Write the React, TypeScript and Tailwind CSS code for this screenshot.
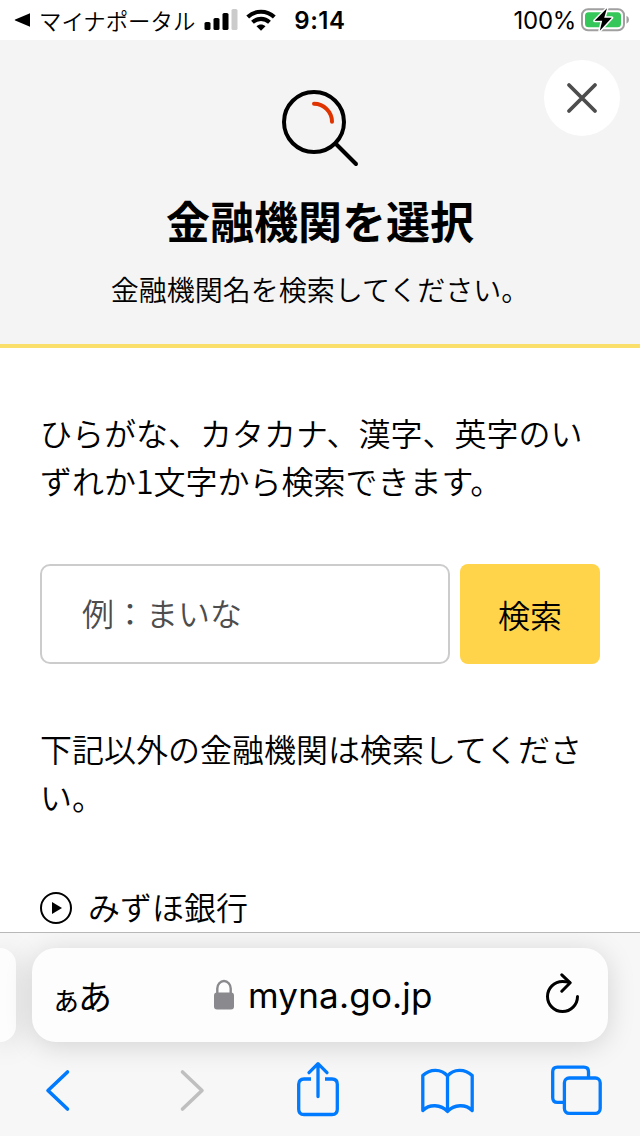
import type { ReactNode } from 'react'

function StatusBar() {
    return (
        <div className="flex h-10 shrink-0 items-center bg-white pl-[14px] pr-[10px] text-black">
            <svg width="17" height="16" viewBox="0 0 17 16" aria-hidden="true">
                <path d="M16 1.2v13.6L1.2 8.6q-1.2-.6 0-1.2z" />
            </svg>
            <span className="ml-2 whitespace-nowrap text-[22.4px] font-[350] leading-10">マイナポータル</span>

            {/* Signal strength */}
            <svg className="ml-[9px]" width="34" height="22" viewBox="0 0 34 22" aria-hidden="true">
                <rect x="0.5" y="13" width="6" height="8" rx="1.6" />
                <rect x="9.5" y="9" width="6" height="12" rx="1.6" />
                <rect x="18.5" y="4" width="6" height="17" rx="1.6" />
                <rect x="27.5" y="0" width="6" height="21" rx="1.6" fill="#cbcbcb" />
            </svg>

            {/* Wi-Fi */}
            <svg className="ml-2" width="30" height="22" viewBox="0 0 30 22" fill="none" stroke="#000" strokeWidth="4.1" aria-hidden="true">
                <path d="M1.7 8C9.3 .9 20.7 .9 28.3 8" />
                <path d="M6.5 13.2c4.9-4.5 12.1-4.5 17 0" />
                <path d="M10.5 17.2L15 21.7l4.5-4.5c-2.7-2.3-6.3-2.3-9 0z" fill="#000" stroke="none" />
            </svg>

            <span className="ml-[18px] pt-0.5 font-['Inter',sans-serif] text-[24px] font-semibold leading-[38px] tracking-[0.5px]">9:14</span>
            <span className="ml-auto pt-0.5 font-['Inter',sans-serif] text-[24px] leading-[38px] tracking-[-0.3px]">100%</span>

            {/* Battery */}
            <svg className="ml-[5px]" width="49" height="26" viewBox="0 0 49 26" aria-hidden="true">
                <rect x="1" y="2.2" width="42" height="21" rx="6" fill="none" stroke="#a0a0a0" strokeWidth="2" />
                <rect x="4" y="5.2" width="36" height="15" rx="3.5" fill="#35c759" />
                <path d="M45.5 8.8v8q2.5-1 2.5-4t-2.5-4z" fill="#a0a0a0" />
                <path d="M26 1.2L13.6 13.8h7.6L18.8 23.8 30.8 10.8h-7.6z" fill="#000" stroke="#fff" strokeWidth="3" strokeLinejoin="round" paintOrder="stroke" />
            </svg>
        </div>
    )
}

function PageHeader() {
    return (
        <header className="relative flex h-[308px] shrink-0 flex-col items-center border-b-4 border-[#fbdf6b] bg-[#f4f4f4] pt-12">
            <button type="button" aria-label="閉じる" className="absolute right-5 top-5 flex size-[76px] items-center justify-center rounded-full bg-white">
                <svg width="32" height="32" viewBox="0 0 32 32" stroke="#4d4d4d" strokeWidth="3.8" strokeLinecap="round" aria-hidden="true">
                    <path d="M3 3l26 26M29 3L3 29" />
                </svg>
            </button>
            <svg width="80" height="80" viewBox="0 0 80 80" fill="none" strokeWidth="4" strokeLinecap="round" aria-hidden="true">
                <circle cx="34" cy="34" r="30" stroke="#000" />
                <path d="M56 56l20 20" stroke="#000" />
                <path d="M34 15.8a18 18 0 0 1 18 18" stroke="#e03400" />
            </svg>
            <h1 className="mt-[19px] text-[44px] font-bold leading-[66px]">金融機関を選択</h1>
            <p className="mt-[15px] text-[28px] font-[350] leading-[42px]">金融機関名を検索してください。</p>
        </header>
    )
}

function SearchForm() {
    return (
        <form className="mt-[60px] flex gap-[10px]" onSubmit={(e) => e.preventDefault()}>
            <input
                type="text"
                placeholder="例：まいな"
                className="h-[100px] w-[410px] rounded-[10px] border-2 border-[#cccccc] px-10 pb-1 text-[32px] font-[350] placeholder:text-[#4d4d4d] placeholder:opacity-100"
            />
            <button type="submit" className="h-[100px] w-[140px] rounded-lg bg-[#ffd34a] text-[32px] font-[350]">
                検索
            </button>
        </form>
    )
}

function BankLink({ children }: { children: ReactNode }) {
    return (
        <a href="#" className="mt-[62px] flex items-center gap-4 text-[32px]">
            <svg className="mt-1" width="32" height="32" viewBox="0 0 32 32" aria-hidden="true">
                <circle cx="16" cy="16" r="15" fill="none" stroke="#000" strokeWidth="2" />
                <path d="M12 10l10 6-10 6z" />
            </svg>
            <span className="leading-[48px]">{children}</span>
        </a>
    )
}

function AddressBar() {
    return (
        <div className="flex h-[94px] gap-4">
            <div className="w-4 shrink-0 rounded-r-[22px] bg-[#fdfdfd] shadow-[0_4px_28px_rgba(0,0,0,0.15)]" />
            <div className="flex w-[576px] items-center rounded-[24px] bg-[#fdfdfd] pl-[19px] pr-7 shadow-[0_4px_28px_rgba(0,0,0,0.15)]">
                <span className="flex w-[63px] items-baseline pt-0.5 font-normal leading-none">
                    <span className="text-[30px] tracking-[-3px]">ぁ</span>
                    <span className="text-[34px]">あ</span>
                </span>
                <svg className="ml-[99px]" width="22" height="32" viewBox="0 0 22 32" aria-hidden="true">
                    <path d="M4.3 15V9.5a6.7 7.5 0 0 1 13.4 0V15" fill="none" stroke="#8a898e" strokeWidth="2.4" />
                    <rect x="1" y="13.5" width="20" height="17" rx="3" fill="#8a898e" />
                </svg>
                <span className="ml-[13px] font-['Inter',sans-serif] text-[35px] leading-none tracking-[0.2px]">myna.go.jp</span>
                <svg className="mb-[3px] ml-auto" width="36" height="42" viewBox="0 0 36 42" fill="none" stroke="#000" strokeWidth="3" strokeLinecap="round" strokeLinejoin="round" aria-hidden="true">
                    <path d="M33.5 23.5A15 15 0 1 1 18.5 8.5q4 0 7 1" />
                    <path d="M17.8 1.8l8.4 8-8.4 8.4" />
                </svg>
            </div>
        </div>
    )
}

function Toolbar() {
    return (
        <nav className="mt-[18px] flex h-[60px] items-center pl-[44px] pr-[38px]">
            <svg width="28" height="44" viewBox="0 0 28 44" fill="none" stroke="#007aff" strokeWidth="3.6" strokeLinecap="round" strokeLinejoin="round" aria-label="戻る">
                <path d="M23.5 4L4 22.5 23.5 41" />
            </svg>
            <svg className="ml-[106px]" width="28" height="44" viewBox="0 0 28 44" fill="none" stroke="#bfbfbf" strokeWidth="3.6" strokeLinecap="round" strokeLinejoin="round" aria-label="進む">
                <path d="M4.5 4L24 22.5 4.5 41" />
            </svg>
            <svg className="mb-0.5 ml-[90px]" width="44" height="58" viewBox="0 0 44 58" fill="none" stroke="#007aff" strokeWidth="3.3" strokeLinejoin="round" aria-label="共有">
                <path d="M15 19H8q-5.3 0-5.3 5.3v24.9q0 5.3 5.3 5.3h28q5.3 0 5.3-5.3V24.3q0-5.3-5.3-5.3h-7" />
                <path d="M22 36.5V4M13 12.7L22 3.7l9 9" strokeLinecap="round" />
            </svg>
            <svg className="ml-[80px] mt-0.5" width="56" height="48" viewBox="0 0 56 48" fill="none" stroke="#007aff" strokeWidth="3.3" strokeLinejoin="round" aria-label="ブックマーク">
                <path d="M27.5 9C21.5 1.5 10 1.5 2.8 8.5V43.5C9 37 21 37 27.5 44.5 34 37 46 37 52.2 43.5V8.5C45 1.5 33.5 1.5 27.5 9zM27.5 9V44.5" />
            </svg>
            <svg className="ml-auto" width="52" height="52" viewBox="0 0 52 52" fill="none" stroke="#007aff" strokeWidth="3.3" aria-label="タブ">
                <path d="M13.5 38.4H7.3q-4.6 0-4.6-4.6V7.7q0-4.6 4.6-4.6h26.6q4.6 0 4.6 4.6v6" />
                <rect x="14.4" y="14" width="35.8" height="35.4" rx="4.8" />
            </svg>
        </nav>
    )
}

export default function App() {
    return (
        <div lang="ja" className="flex h-[1136px] w-[640px] flex-col overflow-hidden bg-white font-['Noto_Sans_CJK_JP',sans-serif] text-black">
            <StatusBar />
            <PageHeader />
            <main className="min-h-0 flex-1 overflow-hidden px-10 pt-[60px] font-[350]">
                <p className="text-[32px] leading-[48px]">ひらがな、カタカナ、漢字、英字のいずれか1文字から検索できます。</p>
                <SearchForm />
                <p className="mt-[60px] text-[32px] leading-[48px]">下記以外の金融機関は検索してください。</p>
                <BankLink>みずほ銀行</BankLink>
            </main>
            <footer className="h-[204px] shrink-0 overflow-hidden border-t border-[#b8b8b8] bg-[#f7f7f7] pt-[15px]">
                <AddressBar />
                <Toolbar />
            </footer>
        </div>
    )
}
